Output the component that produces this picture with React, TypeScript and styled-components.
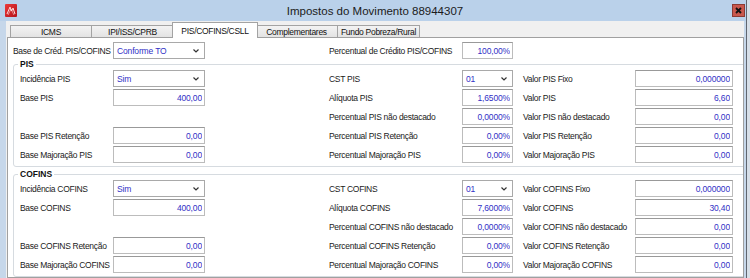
import styled, { createGlobalStyle } from "styled-components";

const GlobalStyle = createGlobalStyle`
  html, body {
    margin: 0;
    padding: 0;
  }
  body {
    width: 750px;
    height: 278px;
    overflow: hidden;
    background: #d7dfe8;
    font-family: "Liberation Sans", Arial, sans-serif;
  }
`

const Window = styled.div`
  width: 747px;
  height: 278px;
  display: flex;
  flex-direction: column;
  box-sizing: border-box;
  background: #c6d7ea;
  border-right: 1px solid #5f6670;
  overflow: hidden;
`

const TitleBar = styled.div`
  height: 21px;
  flex-shrink: 0;
  display: grid;
  grid-template-columns: 1fr auto 1fr;
  align-items: center;
  padding: 0 1px 0 5px;
  background: #bad1ea;
`

const Title = styled.span`
  font-size: 11.5px;
  color: #1b1b1b;
  white-space: nowrap;
`

const CloseButton = styled.div`
  justify-self: end;
  width: 13px;
  height: 13px;
  box-sizing: border-box;
  display: flex;
  align-items: center;
  justify-content: center;
  background: #c9584d;
  border: 1px solid #8c3a33;
`

const Client = styled.div`
  flex: 1;
  display: flex;
  flex-direction: column;
  margin: 0 2px 0 6px;
  background: #f0f0f0;
  min-height: 0;
`

const TabStrip = styled.div`
  height: 16px;
  flex-shrink: 0;
  display: flex;
  align-items: flex-end;
  padding-left: 4px;
`

const Tab = styled.div<{ $active?: boolean }>`
  position: relative;
  box-sizing: border-box;
  width: ${(p) => (p.$active ? 86 : 82)}px;
  height: ${(p) => (p.$active ? 16 : 12)}px;
  margin: 0 ${(p) => (p.$active ? -2 : 0)}px ${(p) => (p.$active ? -1 : 0)}px;
  z-index: ${(p) => (p.$active ? 1 : 0)};
  display: flex;
  align-items: center;
  justify-content: center;
  font-size: 8.5px;
  letter-spacing: -0.3px;
  color: #111;
  white-space: nowrap;
  border: 1px solid #a3a3a3;
  border-bottom: none;
  border-left-width: ${(p) => (p.$active ? 1 : 0)}px;
  background: ${(p) =>
    p.$active ? "#ffffff" : "linear-gradient(#f3f3f3, #e3e3e3)"};

  &:first-child {
    border-left-width: 1px;
  }
`

const Panel = styled.div`
  flex: 1;
  margin-left: 1px;
  border: 1px solid #a0a0a0;
  background: #ffffff;
  padding: 4px 0 0 5px;
  overflow: hidden;
`

const FormRow = styled.div<{ $lead: number }>`
  display: grid;
  grid-template-columns: ${(p) => p.$lead}px 216px 133px 61px 112px 98px;
  align-items: center;
  height: 17px;
`

const Label = styled.span`
  font-size: 8.5px;
  letter-spacing: -0.3px;
  color: #1a1a1a;
  white-space: nowrap;
`

const Field = styled.input<{ $w: number }>`
  width: ${(p) => p.$w}px;
  height: 17px;
  box-sizing: border-box;
  margin: 0;
  padding: 0 2px 0 0;
  border: 1px solid #bcbcbc;
  border-top-color: #999999;
  background: #ffffff;
  font-family: inherit;
  font-size: 8.5px;
  letter-spacing: -0.15px;
  color: #3131c6;
  text-align: right;
  outline: none;
`

const Combo = styled.div<{ $w: number }>`
  width: ${(p) => p.$w}px;
  height: 17px;
  box-sizing: border-box;
  display: flex;
  align-items: center;
  justify-content: space-between;
  padding: 0 5px 0 3px;
  border: 1px solid #a9a9a9;
  background: #ffffff;
  font-size: 8.5px;
  letter-spacing: -0.15px;
  color: #3131c6;
`

const Group = styled.fieldset`
  margin: 0 -3px 0 0;
  padding: 1px 6px 3px 6px;
  border: 1px solid #d6dbe0;
  border-radius: 3px;
  min-width: 0;

  & + & {
    margin-top: 2px;
  }
`

const Legend = styled.legend`
  font-size: 8.5px;
  font-weight: bold;
  line-height: 10px;
  color: #111;
  padding: 0 2px;
  margin-left: -2px;
`

const FieldList = styled.div`
  display: flex;
  flex-direction: column;
  gap: 2px;
`

type Cell = { label?: string; value?: string; combo?: boolean }
type Line = [Cell, Cell, Cell]

function Chevron() {
  return (
    <svg width="6" height="4" viewBox="0 0 6 4">
      <polyline points="0.5,0.5 3,3 5.5,0.5" fill="none" stroke="#333" strokeWidth="1.2" />
    </svg>
  )
}

function Input({ cell, width }: { cell: Cell; width: number }) {
  if (cell.value === undefined) return <span />
  if (cell.combo) {
    return (
      <Combo $w={width}>
        <span>{cell.value}</span>
        <Chevron />
      </Combo>
    )
  }
  return <Field $w={width} readOnly value={cell.value} />
}

function Row({ line, lead }: { line: Line; lead: number }) {
  const [a, b, c] = line
  return (
    <FormRow $lead={lead}>
      <Label>{a.label}</Label>
      <Input cell={a} width={92} />
      <Label>{b.label}</Label>
      <Input cell={b} width={51} />
      <Label>{c.label}</Label>
      <Input cell={c} width={98} />
    </FormRow>
  )
}

function taxLines(t: string, aliquota: string, valor: string): Line[] {
  return [
    [
      { label: `Incidência ${t}`, value: "Sim", combo: true },
      { label: `CST ${t}`, value: "01", combo: true },
      { label: `Valor ${t} Fixo`, value: "0,000000" },
    ],
    [
      { label: `Base ${t}`, value: "400,00" },
      { label: `Alíquota ${t}`, value: aliquota },
      { label: `Valor ${t}`, value: valor },
    ],
    [
      {},
      { label: `Percentual ${t} não destacado`, value: "0,0000%" },
      { label: `Valor ${t} não destacado`, value: "0,00" },
    ],
    [
      { label: `Base ${t} Retenção`, value: "0,00" },
      { label: `Percentual ${t} Retenção`, value: "0,00%" },
      { label: `Valor ${t} Retenção`, value: "0,00" },
    ],
    [
      { label: `Base Majoração ${t}`, value: "0,00" },
      { label: `Percentual Majoração ${t}`, value: "0,00%" },
      { label: `Valor Majoração ${t}`, value: "0,00" },
    ],
  ]
}

const groups = [
  { name: "PIS", lines: taxLines("PIS", "1,6500%", "6,60") },
  { name: "COFINS", lines: taxLines("COFINS", "7,6000%", "30,40") },
]

const tabs = ["ICMS", "IPI/ISS/CPRB", "PIS/COFINS/CSLL", "Complementares", "Fundo Pobreza/Rural"]

function AppIcon() {
  return (
    <svg width="12" height="13" viewBox="0 0 12 13">
      <defs>
        <linearGradient id="ic" x1="0" y1="0" x2="1" y2="1">
          <stop offset="0" stopColor="#ec3a3a" />
          <stop offset="1" stopColor="#b3121a" />
        </linearGradient>
      </defs>
      <rect x="0" y="0" width="12" height="13" rx="1" fill="url(#ic)" />
      <path d="M2 10 L5 3 L6.5 7 L8 4 L10 10" fill="none" stroke="#ffd9d9" strokeWidth="1" />
      <path d="M3 11 L6 5 L9 11" fill="none" stroke="#ffffff" strokeWidth="0.7" opacity="0.7" />
    </svg>
  )
}

export default function App() {
  return (
    <>
      <GlobalStyle />
      <Window>
        <TitleBar>
          <AppIcon />
          <Title>Impostos do Movimento 88944307</Title>
          <CloseButton>
            <svg width="7" height="7" viewBox="0 0 7 7">
              <path d="M1 1 L6 6 M6 1 L1 6" stroke="#111" strokeWidth="1.8" />
            </svg>
          </CloseButton>
        </TitleBar>
        <Client>
          <TabStrip>
            {tabs.map((t) => (
              <Tab key={t} $active={t === "PIS/COFINS/CSLL"}>{t}</Tab>
            ))}
          </TabStrip>
          <Panel>
            <Row
              lead={100}
              line={[
                { label: "Base de Créd. PIS/COFINS", value: "Conforme TO", combo: true },
                { label: "Percentual de Crédito PIS/COFINS", value: "100,00%" },
                {},
              ]}
            />
            {groups.map((g) => (
              <Group key={g.name}>
                <Legend>{g.name}</Legend>
                <FieldList>
                  {g.lines.map((line, i) => (
                    <Row key={i} lead={93} line={line} />
                  ))}
                </FieldList>
              </Group>
            ))}
          </Panel>
        </Client>
      </Window>
    </>
  )
}
